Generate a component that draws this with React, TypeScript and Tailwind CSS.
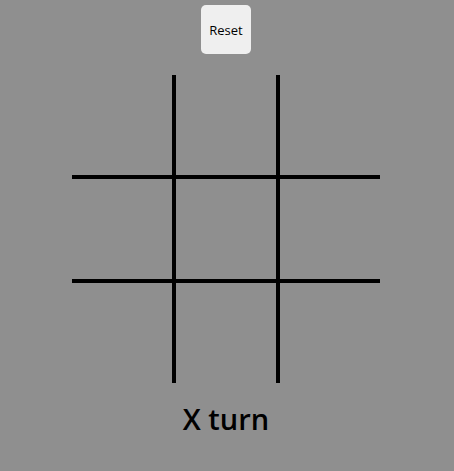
const cells = Array.from({ length: 9 }, (_, i) => i);

export default function App() {
  return (
    <div className="min-h-screen w-full bg-[#8f8f8f] pr-[2px] flex flex-col items-center font-['Open_Sans',sans-serif] text-black">
      <button className="mt-[5px] h-[49px] w-[50px] rounded-[5px] bg-[#efefef] pt-[2px] text-[13px] text-black">
        Reset
      </button>

      <div className="mt-[21px] grid grid-cols-[100px_100px_100px] grid-rows-[100px_100px_100px] gap-[4px] bg-black">
        {cells.map((i) => (
          <div key={i} className="bg-[#8f8f8f]" />
        ))}
      </div>

      <p className="mt-[19px] text-[29px] font-semibold leading-[34px]">X turn</p>
    </div>
  );
}
